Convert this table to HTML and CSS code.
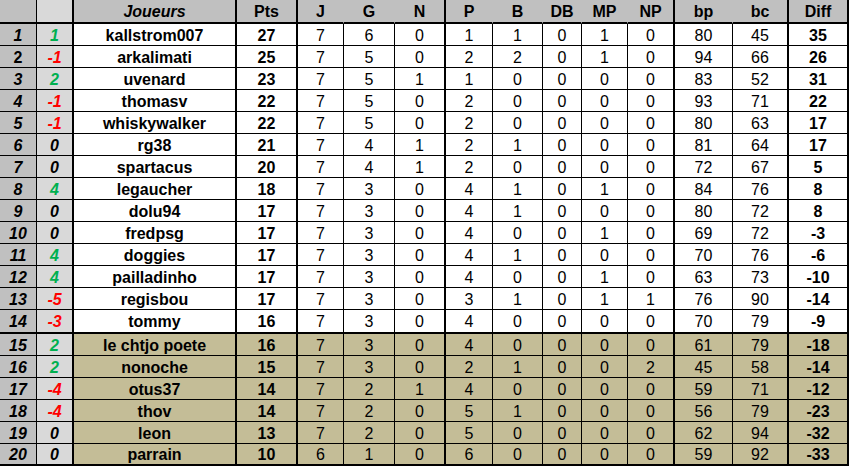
FILE: index.html
```html
<!DOCTYPE html>
<html lang="fr">
<head>
<meta charset="utf-8">
<title>Classement</title>
<link rel="stylesheet" href="styles.css">
</head>
<body>
<div class="board">
  <div class="row head"><div></div><div></div><div class="it">Joueurs</div><div>Pts</div><div>J</div><div>G</div><div>N</div><div>P</div><div>B</div><div>DB</div><div>MP</div><div>NP</div><div>bp</div><div>bc</div><div>Diff</div></div>
  <div class="row"><div>1</div><div class="up">1</div><div>kallstrom007</div><div>27</div><div>7</div><div>6</div><div>0</div><div>1</div><div>1</div><div>0</div><div>1</div><div>0</div><div>80</div><div>45</div><div>35</div></div>
  <div class="row"><div class="st">2</div><div class="dn">-1</div><div>arkalimati</div><div>25</div><div>7</div><div>5</div><div>0</div><div>2</div><div>2</div><div>0</div><div>1</div><div>0</div><div>94</div><div>66</div><div>26</div></div>
  <div class="row"><div>3</div><div class="up">2</div><div>uvenard</div><div>23</div><div>7</div><div>5</div><div>1</div><div>1</div><div>0</div><div>0</div><div>0</div><div>0</div><div>83</div><div>52</div><div>31</div></div>
  <div class="row"><div>4</div><div class="dn">-1</div><div>thomasv</div><div>22</div><div>7</div><div>5</div><div>0</div><div>2</div><div>0</div><div>0</div><div>0</div><div>0</div><div>93</div><div>71</div><div>22</div></div>
  <div class="row"><div>5</div><div class="dn">-1</div><div>whiskywalker</div><div>22</div><div>7</div><div>5</div><div>0</div><div>2</div><div>0</div><div>0</div><div>0</div><div>0</div><div>80</div><div>63</div><div>17</div></div>
  <div class="row"><div>6</div><div>0</div><div>rg38</div><div>21</div><div>7</div><div>4</div><div>1</div><div>2</div><div>1</div><div>0</div><div>0</div><div>0</div><div>81</div><div>64</div><div>17</div></div>
  <div class="row"><div>7</div><div>0</div><div>spartacus</div><div>20</div><div>7</div><div>4</div><div>1</div><div>2</div><div>0</div><div>0</div><div>0</div><div>0</div><div>72</div><div>67</div><div>5</div></div>
  <div class="row"><div>8</div><div class="up">4</div><div>legaucher</div><div>18</div><div>7</div><div>3</div><div>0</div><div>4</div><div>1</div><div>0</div><div>1</div><div>0</div><div>84</div><div>76</div><div>8</div></div>
  <div class="row"><div>9</div><div>0</div><div>dolu94</div><div>17</div><div>7</div><div>3</div><div>0</div><div>4</div><div>1</div><div>0</div><div>0</div><div>0</div><div>80</div><div>72</div><div>8</div></div>
  <div class="row"><div>10</div><div>0</div><div>fredpsg</div><div>17</div><div>7</div><div>3</div><div>0</div><div>4</div><div>0</div><div>0</div><div>1</div><div>0</div><div>69</div><div>72</div><div>-3</div></div>
  <div class="row"><div>11</div><div class="up">4</div><div>doggies</div><div>17</div><div>7</div><div>3</div><div>0</div><div>4</div><div>1</div><div>0</div><div>0</div><div>0</div><div>70</div><div>76</div><div>-6</div></div>
  <div class="row"><div>12</div><div class="up">4</div><div>pailladinho</div><div>17</div><div>7</div><div>3</div><div>0</div><div>4</div><div>0</div><div>0</div><div>1</div><div>0</div><div>63</div><div>73</div><div>-10</div></div>
  <div class="row"><div>13</div><div class="dn">-5</div><div>regisbou</div><div>17</div><div>7</div><div>3</div><div>0</div><div>3</div><div>1</div><div>0</div><div>1</div><div>1</div><div>76</div><div>90</div><div>-14</div></div>
  <div class="row cut"><div>14</div><div class="dn">-3</div><div>tommy</div><div>16</div><div>7</div><div>3</div><div>0</div><div>4</div><div>0</div><div>0</div><div>0</div><div>0</div><div>70</div><div>79</div><div>-9</div></div>
  <div class="row low"><div>15</div><div class="up">2</div><div>le chtjo poete</div><div>16</div><div>7</div><div>3</div><div>0</div><div>4</div><div>0</div><div>0</div><div>0</div><div>0</div><div>61</div><div>79</div><div>-18</div></div>
  <div class="row low"><div>16</div><div class="up">2</div><div>nonoche</div><div>15</div><div>7</div><div>3</div><div>0</div><div>2</div><div>1</div><div>0</div><div>0</div><div>2</div><div>45</div><div>58</div><div>-14</div></div>
  <div class="row low"><div>17</div><div class="dn">-4</div><div>otus37</div><div>14</div><div>7</div><div>2</div><div>1</div><div>4</div><div>0</div><div>0</div><div>0</div><div>0</div><div>59</div><div>71</div><div>-12</div></div>
  <div class="row low"><div>18</div><div class="dn">-4</div><div>thov</div><div>14</div><div>7</div><div>2</div><div>0</div><div>5</div><div>1</div><div>0</div><div>0</div><div>0</div><div>56</div><div>79</div><div>-23</div></div>
  <div class="row low"><div>19</div><div>0</div><div>leon</div><div>13</div><div>7</div><div>2</div><div>0</div><div>5</div><div>0</div><div>0</div><div>0</div><div>0</div><div>62</div><div>94</div><div>-32</div></div>
  <div class="row low last"><div>20</div><div>0</div><div>parrain</div><div>10</div><div>6</div><div>1</div><div>0</div><div>6</div><div>0</div><div>0</div><div>0</div><div>0</div><div>59</div><div>92</div><div>-33</div></div>
</div>
</body>
</html>
```
FILE: styles.css
```css
html, body {
  margin: 0;
  padding: 0;
  background: #ffffff;
}

.board {
  display: grid;
  grid-template-columns: 37px 37px 163px 61px 46px 51px 51px 47px 50px 39px 46px 47px 58px 56px 60px;
  width: 849px;
  font-family: "Liberation Sans", Arial, sans-serif;
  font-size: 16px;
  color: #000;
}

.row {
  display: contents;
}

.row > div {
  box-sizing: border-box;
  height: 22px;
  padding-top: 2px;
  line-height: 19px;
  text-align: center;
  border-right: 1px solid #000;
  border-bottom: 1px solid #000;
  background: #ffffff;
  white-space: nowrap;
}

/* thick column separators */
.row > div:nth-child(2),
.row > div:nth-child(3),
.row > div:nth-child(4),
.row > div:nth-child(7),
.row > div:nth-child(12),
.row > div:nth-child(14),
.row > div:nth-child(15) {
  border-right-width: 2px;
}

/* bold columns */
.row > div:nth-child(1),
.row > div:nth-child(2),
.row > div:nth-child(3),
.row > div:nth-child(4),
.row > div:nth-child(15) {
  font-weight: bold;
}

.row > div:nth-child(1) {
  background: #c0c0c0;
  font-style: italic;
}

.row > div:nth-child(2) {
  background: #d9d9d9;
  font-style: italic;
}

.row > div.st {
  font-style: normal;
}

.row > div.up {
  color: #00b050;
}

.row > div.dn {
  color: #ff0000;
}

.head > div {
  height: 24px;
  padding-top: 2px;
  line-height: 20px;
  border-bottom-width: 2px;
  font-weight: bold;
  background: #c0c0c0;
}

.head > div:nth-child(2) {
  background: #d9d9d9;
}

/* thin separators do not run through the header */
.head > div:nth-child(5),
.head > div:nth-child(6),
.head > div:nth-child(8),
.head > div:nth-child(9),
.head > div:nth-child(10),
.head > div:nth-child(11),
.head > div:nth-child(13) {
  border-right-color: #c0c0c0;
}

.head > div.it {
  font-style: italic;
}

.cut > div {
  height: 24px;
  line-height: 20px;
  border-bottom-width: 2px;
}

.low > div:nth-child(n+3) {
  background: #c4bd97;
}

.last > div {
  height: 22px;
  line-height: 18px;
  border-bottom-width: 2px;
}
```
